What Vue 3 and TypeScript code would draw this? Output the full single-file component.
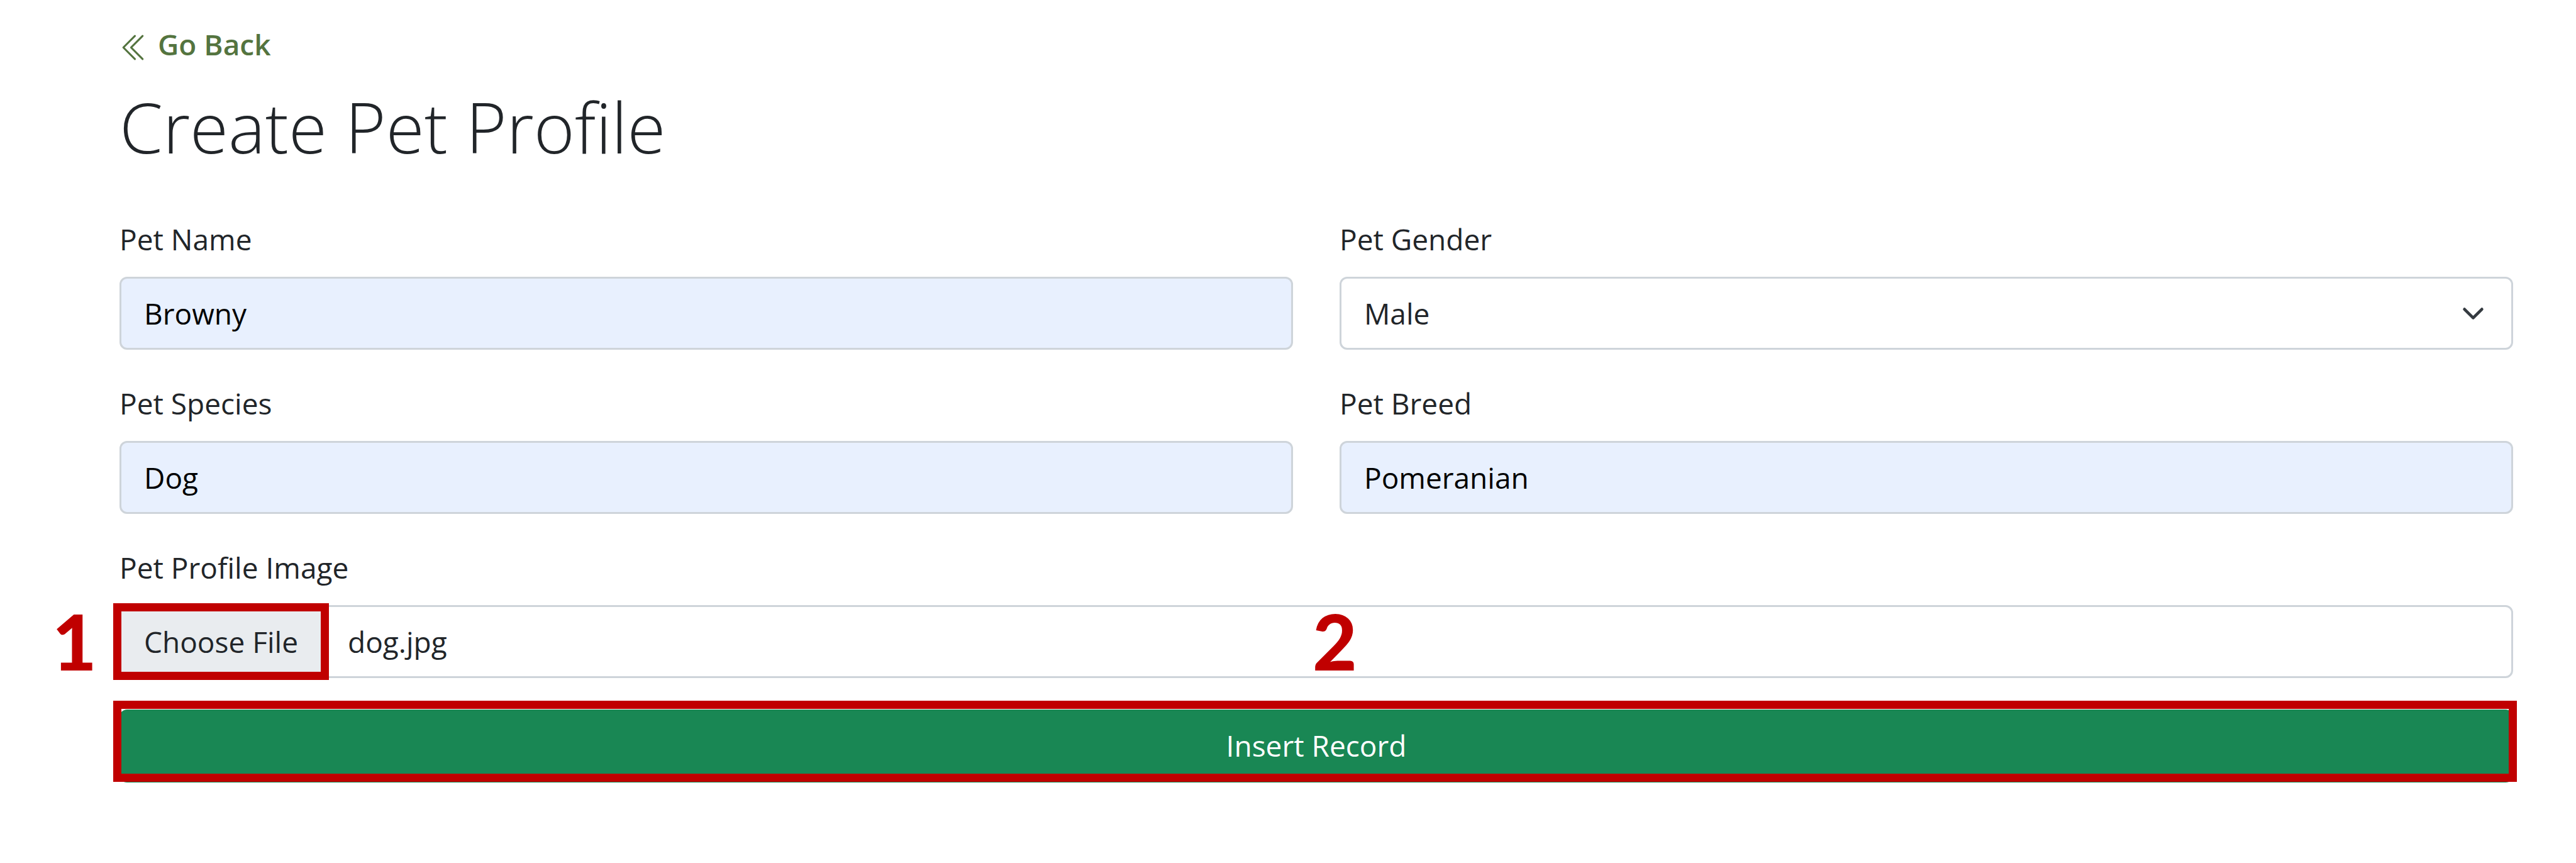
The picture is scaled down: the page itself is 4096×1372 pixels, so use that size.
<script setup lang="ts">
import { onMounted, ref } from 'vue'

const petName = ref('Browny')
const gender = ref('Male')
const species = ref('Dog')
const breed = ref('Pomeranian')
const genders: string[] = ['Male', 'Female']
const fileInput = ref<HTMLInputElement | null>(null)

onMounted(() => {
  const transfer = new DataTransfer()
  transfer.items.add(new File([''], 'dog.jpg', { type: 'image/jpeg' }))
  if (fileInput.value) fileInput.value.files = transfer.files
})
</script>

<template>
  <main class="page">
    <a class="back" href="#">
      <svg class="back-icon" viewBox="0 0 16 16" fill="currentColor" aria-hidden="true">
        <path d="M8.354 1.646a.5.5 0 0 1 0 .708L2.707 8l5.647 5.646a.5.5 0 0 1-.708.708l-6-6a.5.5 0 0 1 0-.708l6-6a.5.5 0 0 1 .708 0z" />
        <path d="M12.354 1.646a.5.5 0 0 1 0 .708L6.707 8l5.647 5.646a.5.5 0 0 1-.708.708l-6-6a.5.5 0 0 1 0-.708l6-6a.5.5 0 0 1 .708 0z" />
      </svg>
      Go Back
    </a>
    <h1 class="title">Create Pet Profile</h1>

    <form class="form" @submit.prevent>
      <div class="field">
        <label for="pet-name">Pet Name</label>
        <input id="pet-name" v-model="petName" class="control filled" type="text" />
      </div>
      <div class="field">
        <label for="pet-gender">Pet Gender</label>
        <div class="select-wrap">
          <select id="pet-gender" v-model="gender" class="control">
            <option v-for="g in genders" :key="g">{{ g }}</option>
          </select>
          <svg class="chevron" viewBox="0 0 16 16" aria-hidden="true">
            <path d="m2 5 6 6 6-6" fill="none" stroke="#343a40" stroke-width="2" stroke-linecap="round" stroke-linejoin="round" />
          </svg>
        </div>
      </div>
      <div class="field">
        <label for="pet-species">Pet Species</label>
        <input id="pet-species" v-model="species" class="control filled" type="text" />
      </div>
      <div class="field">
        <label for="pet-breed">Pet Breed</label>
        <input id="pet-breed" v-model="breed" class="control filled" type="text" />
      </div>
      <div class="field wide">
        <label for="pet-image">Pet Profile Image</label>
        <div class="file-wrap">
          <input id="pet-image" ref="fileInput" class="control file" type="file" />
          <span class="frame file-frame"></span>
          <span class="step step-one">1</span>
          <span class="step step-two">2</span>
        </div>
      </div>
      <div class="submit-wrap wide">
        <button class="submit" type="submit">Insert Record</button>
        <span class="frame submit-frame"></span>
      </div>
    </form>
  </main>
</template>

<style>
body {
  margin: 0;
  background: #fff;
}
</style>

<style scoped>
.page {
  box-sizing: border-box;
  padding: 35px 100px 128px 190px;
  color: #212529;
  font-family: "Open Sans", "Noto Sans", sans-serif;
  font-size: 46px;
  line-height: 70px;
}
.back {
  display: block;
  width: fit-content;
  color: #54743f;
  font-weight: 600;
  text-decoration: none;
}
.back-icon {
  width: 49px;
  height: 49px;
  vertical-align: -12px;
}
.title {
  margin: 30px 0 77px;
  font-size: 111px;
  font-weight: 300;
  line-height: 133px;
}
.form {
  display: grid;
  grid-template-columns: 1fr 1fr;
  gap: 50px 74px;
}
.wide {
  grid-column: 1 / -1;
}
.field {
  display: flex;
  flex-direction: column;
  gap: 25px;
}
.control {
  display: block;
  box-sizing: border-box;
  width: 100%;
  height: 116px;
  margin: 0;
  padding: 20px 36px;
  border: 3px solid #ced4da;
  border-radius: 12px;
  background: #fff;
  color: #212529;
  font: inherit;
  line-height: 70px;
  appearance: none;
  outline: none;
}
.filled {
  background: #e8f0fe;
  color: #000;
}
.select-wrap,
.file-wrap,
.submit-wrap {
  position: relative;
}
.chevron {
  position: absolute;
  top: 40px;
  right: 45px;
  width: 37px;
  height: 37px;
  pointer-events: none;
}
.file {
  overflow: hidden;
}
.file::file-selector-button {
  margin: -20px 40px -20px -36px;
  padding: 20px 36px;
  border: 0 solid #ced4da;
  border-right-width: 3px;
  border-radius: 0;
  background: #e9ecef;
  color: #212529;
  font: inherit;
  line-height: 70px;
}
.frame {
  position: absolute;
  box-sizing: border-box;
  border: 13px solid #c00000;
  pointer-events: none;
}
.file-frame {
  top: -3px;
  left: -10px;
  width: 343px;
  height: 122px;
}
.step {
  position: absolute;
  top: -1px;
  color: #c00000;
  font-family: Lato, "Open Sans", sans-serif;
  font-size: 122px;
  font-weight: 900;
  line-height: 116px;
  pointer-events: none;
}
.step-one {
  left: -107px;
}
.step-two {
  left: calc(50% - 6px);
}
.submit {
  display: block;
  width: 100%;
  height: 116px;
  margin: 0;
  padding: 20px 36px 22px;
  border: 0;
  border-radius: 12px;
  background: #198754;
  color: #fff;
  font: inherit;
}
.submit-frame {
  inset: -14px -6px 1px -10px;
}
</style>
